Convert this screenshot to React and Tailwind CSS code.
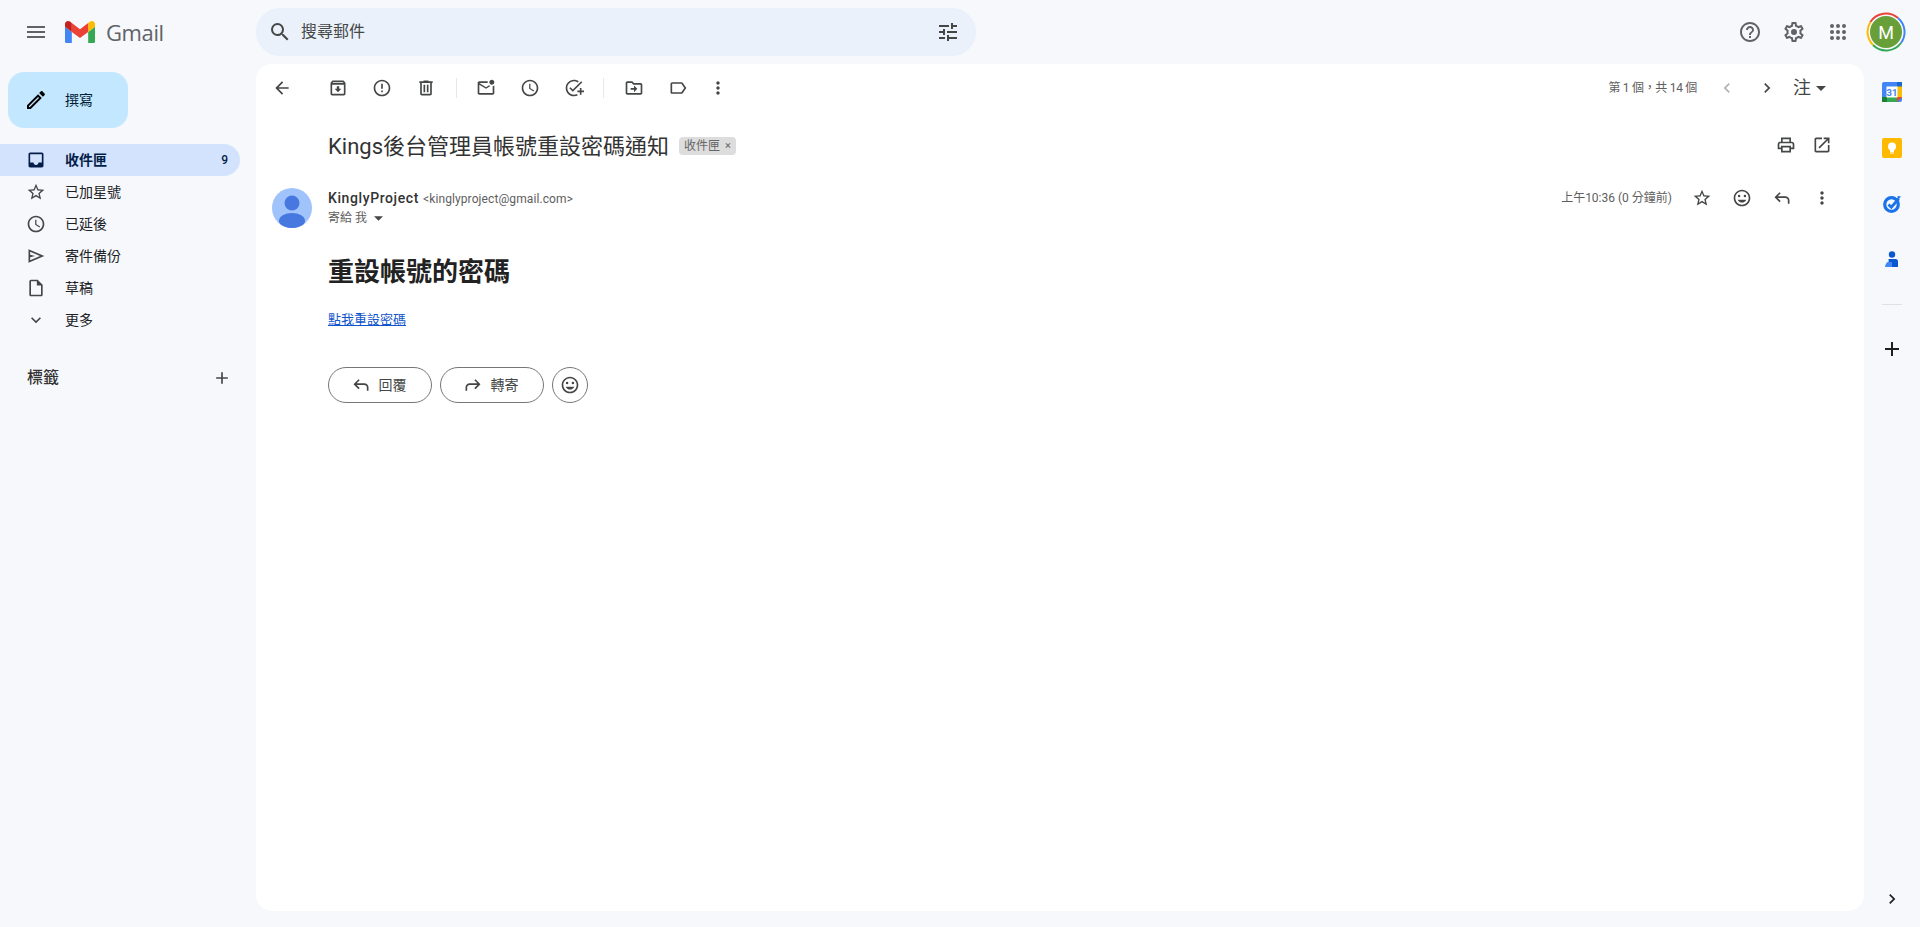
const P = {
  menu: "M3 18h18v-2H3v2zm0-5h18v-2H3v2zm0-7v2h18V6H3z",
  search: "M15.5 14h-.79l-.28-.27A6.471 6.471 0 0 0 16 9.5 6.5 6.5 0 1 0 9.5 16c1.61 0 3.09-.59 4.23-1.57l.27.28v.79l5 4.99L20.49 19l-4.99-5zm-6 0C7.01 14 5 11.99 5 9.5S7.01 5 9.5 5 14 7.01 14 9.5 11.99 14 9.5 14z",
  tune: "M3 17v2h6v-2H3zM3 5v2h10V5H3zm10 16v-2h8v-2h-8v-2h-2v6h2zM7 9v2H3v2h4v2h2V9H7zm14 4v-2H11v2h10zm-6-4h2V7h4V5h-4V3h-2v6z",
  help: "M11 18h2v-2h-2v2zm1-16C6.48 2 2 6.48 2 12s4.48 10 10 10 10-4.48 10-10S17.52 2 12 2zm0 18c-4.41 0-8-3.59-8-8s3.59-8 8-8 8 3.59 8 8-3.59 8-8 8zm0-14c-2.21 0-4 1.79-4 4h2c0-1.1.9-2 2-2s2 .9 2 2c0 2-3 1.75-3 5h2c0-2.25 3-2.5 3-5 0-2.21-1.79-4-4-4z",
  settings: "M19.43 12.98c.04-.32.07-.64.07-.98 0-.34-.03-.66-.07-.98l2.11-1.65c.19-.15.24-.42.12-.64l-2-3.46c-.09-.16-.26-.25-.44-.25-.06 0-.12.01-.17.03l-2.49 1c-.52-.4-1.08-.73-1.69-.98l-.38-2.65C14.46 2.18 14.25 2 14 2h-4c-.25 0-.46.18-.49.42l-.38 2.65c-.61.25-1.17.59-1.69.98l-2.49-1c-.06-.02-.12-.03-.18-.03-.17 0-.34.09-.43.25l-2 3.46c-.13.22-.07.49.12.64l2.11 1.65c-.04.32-.07.65-.07.98 0 .33.03.66.07.98l-2.11 1.65c-.19.15-.24.42-.12.64l2 3.46c.09.16.26.25.44.25.06 0 .12-.01.17-.03l2.49-1c.52.4 1.08.73 1.69.98l.38 2.65c.03.24.24.42.49.42h4c.25 0 .46-.18.49-.42l.38-2.65c.61-.25 1.17-.59 1.69-.98l2.49 1c.06.02.12.03.18.03.17 0 .34-.09.43-.25l2-3.46c.12-.22.07-.49-.12-.64l-2.11-1.65zm-1.98-1.71c.04.31.05.52.05.73 0 .21-.02.43-.05.73l-.14 1.13.89.7 1.08.84-.7 1.21-1.27-.51-1.04-.42-.9.68c-.43.32-.84.56-1.25.73l-1.06.43-.16 1.13-.2 1.35h-1.4l-.19-1.35-.16-1.13-1.06-.43c-.43-.18-.83-.41-1.23-.71l-.91-.7-1.06.43-1.27.51-.7-1.21 1.08-.84.89-.7-.14-1.13c-.03-.31-.05-.54-.05-.74s.02-.43.05-.73l.14-1.13-.89-.7-1.08-.84.7-1.21 1.27.51 1.04.42.9-.68c.43-.32.84-.56 1.25-.73l1.06-.43.16-1.13.2-1.35h1.39l.19 1.35.16 1.13 1.06.43c.43.18.83.41 1.23.71l.91.7 1.06-.43 1.27-.51.7 1.21-1.07.85-.89.7.14 1.13zM12 9a3 3 0 1 0 0 6 3 3 0 0 0 0-6z",
  apps: "M6 8a2 2 0 1 0 0-4 2 2 0 0 0 0 4zm6 0a2 2 0 1 0 0-4 2 2 0 0 0 0 4zm6 0a2 2 0 1 0 0-4 2 2 0 0 0 0 4zM6 14a2 2 0 1 0 0-4 2 2 0 0 0 0 4zm6 0a2 2 0 1 0 0-4 2 2 0 0 0 0 4zm6 0a2 2 0 1 0 0-4 2 2 0 0 0 0 4zM6 20a2 2 0 1 0 0-4 2 2 0 0 0 0 4zm6 0a2 2 0 1 0 0-4 2 2 0 0 0 0 4zm6 0a2 2 0 1 0 0-4 2 2 0 0 0 0 4z",
  edit: "M14.06 9.02l.92.92L5.92 19H5v-.92l9.06-9.06M17.66 3c-.25 0-.51.1-.7.29l-1.83 1.83 3.75 3.75 1.83-1.83c.39-.39.39-1.02 0-1.41l-2.34-2.34c-.2-.2-.45-.29-.71-.29zm-3.6 3.19L3 17.25V21h3.75L17.81 9.94l-3.75-3.75z",
  inbox: "M19 3H5c-1.1 0-2 .9-2 2v14c0 1.1.9 2 2 2h14c1.1 0 2-.9 2-2V5c0-1.1-.9-2-2-2zm0 12h-4c0 1.66-1.35 3-3 3s-3-1.34-3-3H5V5h14v10z",
  star: "M22 9.24l-7.19-.62L12 2 9.19 8.63 2 9.24l5.46 4.73L5.82 21 12 17.27 18.18 21l-1.63-7.03L22 9.24zM12 15.4l-3.76 2.27 1-4.28-3.32-2.88 4.38-.38L12 6.1l1.71 4.04 4.38.38-3.32 2.88 1 4.28L12 15.4z",
  clock: "M11.99 2C6.47 2 2 6.48 2 12s4.47 10 9.99 10C17.52 22 22 17.52 22 12S17.52 2 11.99 2zM12 20c-4.42 0-8-3.58-8-8s3.58-8 8-8 8 3.58 8 8-3.58 8-8 8zm.5-13H11v6l5.25 3.15.75-1.23-4.5-2.67z",
  send: "M3 20V4l19 8-19 8zm2-3 11.85-5L5 7v3.5l6 1.5-6 1.5V17z",
  draft: "M14 2H6c-1.1 0-1.99.9-1.99 2L4 20c0 1.1.89 2 1.99 2H18c1.1 0 2-.9 2-2V8l-6-6zM6 20V4h7v5h5v11H6z",
  more: "M16.59 8.59L12 13.17 7.41 8.59 6 10l6 6 6-6z",
  add: "M19 13h-6v6h-2v-6H5v-2h6V5h2v6h6v2z",
  back: "M20 11H7.83l5.59-5.59L12 4l-8 8 8 8 1.41-1.41L7.83 13H20v-2z",
  archive: "M20.54 5.23l-1.39-1.68C18.88 3.21 18.47 3 18 3H6c-.47 0-.88.21-1.16.55L3.46 5.23C3.17 5.57 3 6.02 3 6.5V19c0 1.1.9 2 2 2h14c1.1 0 2-.9 2-2V6.5c0-.48-.17-.93-.46-1.27zM6.24 5h11.52l.83 1H5.42l.82-1zM5 19V8h14v11H5zm8.45-9h-2.9v3H8l4 4 4-4h-2.55z",
  report: "M11 15h2v2h-2zm0-8h2v6h-2zm.99-5C6.47 2 2 6.48 2 12s4.47 10 9.99 10C17.52 22 22 17.52 22 12S17.52 2 11.99 2zM12 20c-4.42 0-8-3.58-8-8s3.58-8 8-8 8 3.58 8 8-3.58 8-8 8z",
  trash: "M15 4V3H9v1H4v2h1v13c0 1.1.9 2 2 2h10c1.1 0 2-.9 2-2V6h1V4h-5zm2 15H7V6h10v13zM9 8h2v9H9zm4 0h2v9h-2z",
  unread: "M22 8.98V18c0 1.1-.9 2-2 2H4c-1.1 0-2-.9-2-2V6c0-1.1.9-2 2-2h10.1c-.06.32-.1.66-.1 1s.04.68.1 1H4l8 5 3.67-2.29c.47.43 1.02.76 1.63.98L12 13 4 8v10h16V9.9c.74-.15 1.42-.48 2-.92zM16 5c0 1.66 1.34 3 3 3s3-1.34 3-3-1.34-3-3-3-3 1.34-3 3z",
  task: "M22 5.18L10.59 16.6l-4.24-4.24 1.41-1.41 2.83 2.83 10-10L22 5.18zM12 20c-4.41 0-8-3.59-8-8s3.59-8 8-8c1.57 0 3.04.46 4.28 1.25l1.45-1.45C16.1 2.67 14.13 2 12 2 6.48 2 2 6.48 2 12s4.48 10 10 10c1.73 0 3.36-.44 4.78-1.22l-1.5-1.5c-1 .46-2.11.72-3.28.72zm7-5h-3v2h3v3h2v-3h3v-2h-3v-3h-2v3z",
  move: "M20 6h-8l-2-2H4c-1.1 0-2 .9-2 2v12c0 1.1.9 2 2 2h16c1.1 0 2-.9 2-2V8c0-1.1-.9-2-2-2zm0 12H4V6h5.17l2 2H20v10zm-8-4H8v-2h4V9l4 4-4 4v-3z",
  label: "M17.63 5.84C17.27 5.33 16.67 5 16 5L5 5.01C3.9 5.01 3 5.9 3 7v10c0 1.1.9 1.99 2 1.99L16 19c.67 0 1.27-.33 1.63-.84L22 12l-4.37-6.16zM16 17H5V7h11l3.55 5L16 17z",
  vert: "M12 8c1.1 0 2-.9 2-2s-.9-2-2-2-2 .9-2 2 .9 2 2 2zm0 2c-1.1 0-2 .9-2 2s.9 2 2 2 2-.9 2-2-.9-2-2-2zm0 6c-1.1 0-2 .9-2 2s.9 2 2 2 2-.9 2-2-.9-2-2-2z",
  left: "M15.41 7.41L14 6l-6 6 6 6 1.41-1.41L10.83 12z",
  right: "M10 6L8.59 7.41 13.17 12l-4.58 4.59L10 18l6-6z",
  print: "M19 8h-1V3H6v5H5c-1.66 0-3 1.34-3 3v6h4v4h12v-4h4v-6c0-1.66-1.34-3-3-3zM8 5h8v3H8V5zm8 12v2H8v-4h8v2zm2-2v-2H6v2H4v-4c0-.55.45-1 1-1h14c.55 0 1 .45 1 1v4h-2z",
  open: "M19 19H5V5h7V3H5c-1.11 0-2 .9-2 2v14c0 1.1.89 2 2 2h14c1.1 0 2-.9 2-2v-7h-2v7zM14 3v2h3.59l-9.83 9.83 1.41 1.41L19 6.41V10h2V3h-7z",
  reply: "M19 19v-4q0-1.25-.875-2.125T16 12H6.825l3.6 3.6L9 17l-6-6 6-6 1.425 1.4-3.6 3.6H16q2.075 0 3.538 1.463T21 15v4z",
  forward: "M3 19v-4q0-2.075 1.463-3.538T8 10h9.175l-3.6-3.6L15 5l6 6-6 6-1.425-1.4 3.6-3.6H8q-1.25 0-2.125.875T5 15v4z",
  smile: "M12 2C6.47 2 2 6.48 2 12s4.47 10 10 10 10-4.48 10-10S17.53 2 12 2zm0 18c-4.42 0-8-3.58-8-8s3.58-8 8-8 8 3.58 8 8-3.58 8-8 8zm3.5-9a1.5 1.5 0 1 0 0-3 1.5 1.5 0 0 0 0 3zm-7 0a1.5 1.5 0 1 0 0-3 1.5 1.5 0 0 0 0 3zm3.5 6.5c2.33 0 4.31-1.46 5.11-3.5H6.89c.8 2.04 2.78 3.5 5.11 3.5z",
};

function Icon({ d, size = 20, className = "text-[#444746]" }) {
  return (
    <svg viewBox="0 0 24 24" width={size} height={size} className={`shrink-0 fill-current ${className}`}>
      <path d={d} />
    </svg>
  );
}

function Slot({ w, d, size = 20, className }) {
  return (
    <div style={{ width: w }} className="flex h-10 shrink-0 items-center justify-center">
      <Icon d={d} size={size} className={className} />
    </div>
  );
}

function Divider() {
  return <div className="h-5 w-px shrink-0 bg-[#e6e8ea]" />;
}

function GmailLogo() {
  return (
    <svg viewBox="52 42 88 66" width="30" height="22.5" className="shrink-0">
      <path fill="#4285f4" d="M58 108h14V74L52 59v43c0 3.32 2.69 6 6 6" />
      <path fill="#34a853" d="M120 108h14c3.32 0 6-2.69 6-6V59l-20 15" />
      <path fill="#fbbc04" d="M120 48v26l20-15v-8c0-7.42-8.47-11.65-14.4-7.2" />
      <path fill="#ea4335" d="M72 74V48l24 18 24-18v26L96 92" />
      <path fill="#c5221f" d="M52 51v8l20 15V48l-5.6-4.2c-5.94-4.45-14.4-.22-14.4 7.2" />
    </svg>
  );
}

function Header() {
  return (
    <header className="flex h-16 shrink-0 items-center">
      <div className="flex w-[256px] shrink-0 items-center pl-[16px]">
        <Slot w={40} d={P.menu} size={24} className="text-[#5f6368]" />
        <div className="ml-[9px] flex items-center">
          <GmailLogo />
        </div>
        <span className="ml-[11px] font-['Open_Sans'] text-[22px] leading-none tracking-[-0.4px] text-[#5f6368]">Gmail</span>
      </div>
      <div className="flex h-12 w-[720px] shrink-0 items-center rounded-3xl bg-[#eaf1fb]">
        <div className="flex w-[36px] shrink-0 justify-end">
          <Icon d={P.search} size={24} />
        </div>
        <span className="ml-[9px] text-base text-[#444746]">搜尋郵件</span>
        <div className="ml-auto mr-[16px]">
          <Icon d={P.tune} size={24} />
        </div>
      </div>
      <div className="ml-auto flex items-center pr-[14px]">
        <Slot w={44} d={P.help} size={24} className="text-[#5f6368]" />
        <Slot w={44} d={P.settings} size={24} className="text-[#5f6368]" />
        <Slot w={44} d={P.apps} size={24} className="text-[#5f6368]" />
        <div className="relative ml-[6px] flex h-10 w-10 items-center justify-center">
          <svg viewBox="0 0 40 40" width="40" height="40" className="absolute inset-0">
            <g fill="none" strokeWidth="2">
              <path stroke="#ea4335" d="M4.400 10A18.500 18.500 0 0 1 32 6" />
              <path stroke="#4285f4" d="M32 6A18.500 18.500 0 0 1 35 31" />
              <path stroke="#34a853" d="M35 31A18.500 18.500 0 0 1 7 33" />
              <path stroke="#fbbc04" d="M7 33A18.500 18.500 0 0 1 4.400 10" />
            </g>
          </svg>
          <div className="flex h-8 w-8 items-center justify-center rounded-full bg-[#689f38] text-[18px] text-white">M</div>
        </div>
      </div>
    </header>
  );
}

const NAV = [
  ["已加星號", P.star],
  ["已延後", P.clock],
  ["寄件備份", P.send],
  ["草稿", P.draft],
  ["更多", P.more],
];

function Sidebar() {
  return (
    <aside className="w-[256px] shrink-0">
      <div className="ml-2 mt-2 flex h-14 w-[120px] items-center rounded-2xl bg-[#c2e7ff]">
        <div className="flex w-[40px] shrink-0 justify-end">
          <Icon d={P.edit} size={24} className="text-[#000000]" />
        </div>
        <span className="ml-[17px] text-sm text-[#001d35]">撰寫</span>
      </div>
      <nav className="mt-4 w-[240px]">
        <div className="flex h-8 items-center rounded-r-2xl bg-[#d3e3fd] pr-3 text-sm font-bold text-[#041e49]">
          <div className="flex w-[65px] shrink-0 justify-start pl-[26px]">
            <Icon d={P.inbox} size={20} className="text-[#041e49]" />
          </div>
          <span>收件匣</span>
          <span className="ml-auto text-xs font-medium">9</span>
        </div>
        {NAV.map(([t, d]) => (
          <div key={t} className="flex h-8 items-center text-sm text-[#202124]">
            <div className="flex w-[65px] shrink-0 justify-start pl-[26px]">
              <Icon d={d} size={20} />
            </div>
            <span>{t}</span>
          </div>
        ))}
      </nav>
      <div className="mt-[22px] flex h-10 w-[240px] items-center justify-between pl-[27px] pr-[8px]">
        <span className="text-base font-medium text-[#333333]">標籤</span>
        <Icon d={P.add} size={20} />
      </div>
    </aside>
  );
}

function Toolbar() {
  return (
    <div className="flex h-12 items-center pl-[6px] pr-[10px]">
      <Slot w={40} d={P.back} />
      <div className="w-[14px] shrink-0" />
      <Slot w={44} d={P.archive} />
      <Slot w={44} d={P.report} />
      <Slot w={44} d={P.trash} />
      <div className="w-[8px] shrink-0" />
      <Divider />
      <div className="w-[7px] shrink-0" />
      <Slot w={44} d={P.unread} />
      <Slot w={44} d={P.clock} />
      <Slot w={44} d={P.task} />
      <div className="w-[7px] shrink-0" />
      <Divider />
      <div className="w-[8px] shrink-0" />
      <Slot w={44} d={P.move} />
      <Slot w={44} d={P.label} />
      <Slot w={36} d={P.vert} />
      <div className="ml-auto flex items-center">
        <span className="text-xs tracking-[-0.3px] text-[#5e5e5e]">第 1 個，共 14 個</span>
        <div className="w-[10px]" />
        <Slot w={40} d={P.left} className="text-[#b1b3b4]" />
        <Slot w={40} d={P.right} />
        <span className="ml-[6px] text-[18px] leading-none text-[#444746]">注</span>
        <svg viewBox="0 0 10 5" width="10" height="5" className="ml-[5px] mr-[28px] fill-[#444746]"><path d="M0 0h10L5 5z" /></svg>
      </div>
    </div>
  );
}

function Message() {
  return (
    <div className="flex-1 pl-[16px] pr-[16px]">
      <div className="mt-[1px] flex h-[64px] items-center pl-[56px]">
        <h2 className="pt-[3px] text-[22px] font-normal leading-7 text-[#333333]">Kings後台管理員帳號重設密碼通知</h2>
        <span className="ml-[10px] mt-[1px] flex h-[18px] items-center rounded bg-[#dddddd] px-[5px] text-xs text-[#666666]">
          收件匣<span className="ml-[5px] text-[11px] leading-none">×</span>
        </span>
        <div className="ml-auto flex items-center pr-[8px]">
          <Slot w={36} d={P.print} />
          <Slot w={36} d={P.open} />
        </div>
      </div>
      <div className="mt-[11px] flex">
        <div className="relative h-10 w-10 shrink-0 overflow-hidden rounded-full bg-[#a0c3fc]">
          <svg viewBox="0 0 40 40" width="40" height="40" className="absolute inset-0 fill-[#4678df]">
            <circle cx="20" cy="15" r="7.500" />
            <ellipse cx="20" cy="33" rx="13" ry="8" />
          </svg>
        </div>
        <div className="ml-4 flex-1">
          <div className="flex h-10 items-start justify-between">
            <div>
              <div className="h-5 leading-5">
                <span className="text-sm font-medium tracking-[0.6px] text-[#333333]">KinglyProject</span>
                <span className="ml-1 text-xs tracking-[0.1px] text-[#5e5e5e]">&lt;kinglyproject@gmail.com&gt;</span>
              </div>
              <div className="flex h-5 items-center text-xs text-[#5e5e5e]">
                寄給 我
                <svg viewBox="0 0 10 5" width="9" height="5" className="ml-[7px] fill-[#444746]"><path d="M0 0h10L5 5z" /></svg>
              </div>
            </div>
            <div className="flex h-5 items-center pr-[6px]">
              <span className="text-xs text-[#5e5e5e]">上午10:36 (0 分鐘前)</span>
              <div className="w-[10px]" />
              <Slot w={40} d={P.star} />
              <Slot w={40} d={P.smile} />
              <Slot w={40} d={P.reply} />
              <Slot w={40} d={P.vert} />
            </div>
          </div>
          <h1 className="mt-[26px] text-[26px] font-bold leading-9 text-[#222222]">重設帳號的密碼</h1>
          <a className="mt-[20px] block text-[13px] leading-5 text-[#1155cc] underline">點我重設密碼</a>
          <div className="mt-[37px] flex gap-2">
            <button className="flex h-9 w-[104px] items-center justify-center rounded-[18px] border border-[#747775] text-sm text-[#444746]">
              <Icon d={P.reply} size={20} className="text-[#444746] -ml-[3px]" />
              <span className="ml-[8px]">回覆</span>
            </button>
            <button className="flex h-9 w-[104px] items-center justify-center rounded-[18px] border border-[#747775] text-sm text-[#444746]">
              <Icon d={P.forward} size={20} className="text-[#444746] -ml-[3px]" />
              <span className="ml-[8px]">轉寄</span>
            </button>
            <button className="flex h-9 w-9 items-center justify-center rounded-full border border-[#747775]">
              <Icon d={P.smile} size={20} />
            </button>
          </div>
        </div>
      </div>
    </div>
  );
}

function Rail() {
  return (
    <aside className="flex w-[56px] shrink-0 flex-col items-center">
      <div className="mt-[18px] flex h-5 w-5 items-center justify-center">
        <svg viewBox="0 0 20 20" width="20" height="20">
          <rect x="0" y="0" width="20" height="20" rx="2" fill="#4285f4" />
          <rect x="15" y="0" width="5" height="5" fill="#1967d2" />
          <rect x="15" y="4.500" width="5" height="11" fill="#fbbc04" />
          <rect x="4.500" y="15" width="11" height="5" fill="#34a853" />
          <rect x="0" y="15" width="5" height="5" fill="#188038" />
          <path d="M15 15h5l-5 5z" fill="#ea4335" />
          <rect x="4.500" y="4.500" width="11" height="11" fill="#ffffff" />
          <text x="10" y="13.500" textAnchor="middle" fontSize="9.500" fontWeight="700" fill="#4285f4" fontFamily="Roboto">31</text>
        </svg>
      </div>
      <div className="mt-[36px] flex h-5 w-5 items-center justify-center rounded-[2px] bg-[#ffba00]">
        <svg viewBox="0 0 20 20" width="20" height="20" className="fill-white">
          <circle cx="10" cy="8.500" r="4" />
          <path d="M8 12h4v2H8zM8 14.600h4v1H8z" />
        </svg>
      </div>
      <div className="mt-[36px] flex h-5 w-5 items-center justify-center">
        <svg viewBox="0 0 20 20" width="20" height="20" fill="none">
          <circle cx="9.500" cy="10.500" r="6.800" stroke="#1a73e8" strokeWidth="3.200" />
          <path d="M6.500 10.500l2.800 2.800 7.500-8.500" stroke="#1a73e8" strokeWidth="2.800" />
          <path d="M15.500 2l3.500.5-3 3.500z" fill="#1a73e8" />
        </svg>
      </div>
      <div className="mt-[36px] flex h-5 w-5 items-center justify-center">
        <svg viewBox="0 0 20 20" width="20" height="20">
          <circle cx="10" cy="4.500" r="3.200" fill="#0b57d0" />
          <path d="M6.500 9h7a2.500 2.500 0 0 1 2.500 2.500V17H7z" fill="#0b57d0" />
          <path d="M10 12H6q-1.500 0-2 2l-1 2q-.3 1 1 1h6z" fill="#4285f4" />
        </svg>
      </div>
      <div className="mt-[34px] h-px w-5 bg-[#dfe1e5]" />
      <div className="mt-[32px]">
        <Icon d={P.add} size={24} className="text-[#1f1f1f]" />
      </div>
      <div className="mt-auto mb-[2px]">
        <Icon d={P.right} size={20} className="text-[#1f1f1f]" />
      </div>
    </aside>
  );
}

export default function App() {
  return (
    <div className="flex h-screen flex-col overflow-hidden bg-[#f6f8fc] font-[Roboto,'Noto_Sans_CJK_TC',sans-serif]">
      <Header />
      <div className="flex min-h-0 flex-1 pb-4">
        <Sidebar />
        <main className="flex min-w-0 flex-1 flex-col rounded-2xl bg-white">
          <Toolbar />
          <Message />
        </main>
        <Rail />
      </div>
    </div>
  );
}
